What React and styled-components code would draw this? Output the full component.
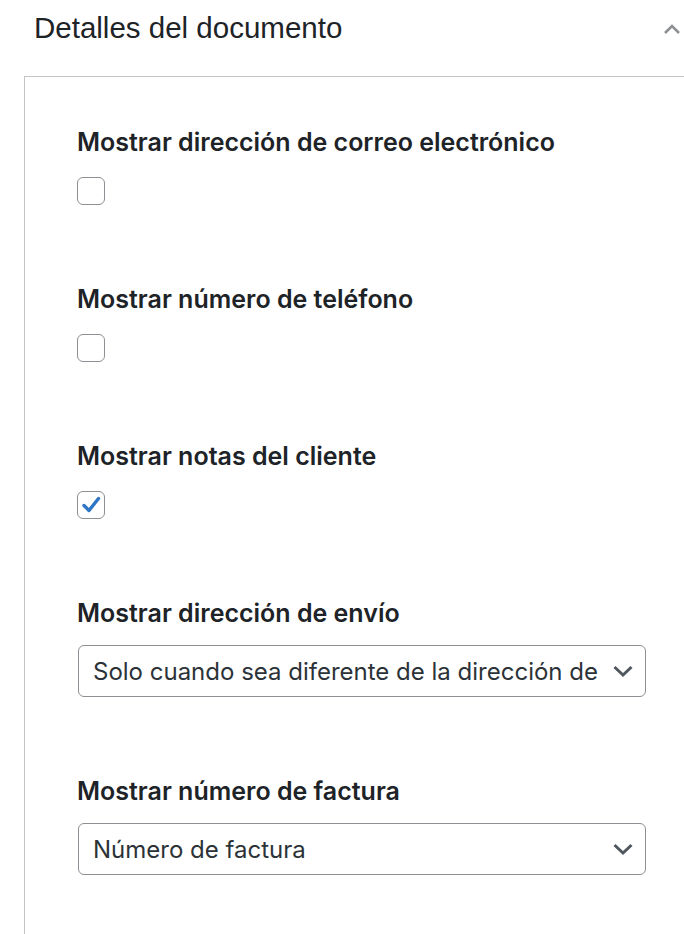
import React from 'react'
import styled, { createGlobalStyle } from 'styled-components'

const GlobalStyle = createGlobalStyle`
    body {
        margin: 0;
        background: #fff;
    }
`

const ChevronUp = () => (
    <svg width="20" height="20" viewBox="0 0 20 20">
        <path d="M3 13 L10 6 L17 13" fill="none" stroke="currentColor" strokeWidth="2.6" />
    </svg>
)

const ChevronDown = () => (
    <svg width="20" height="20" viewBox="0 0 20 20">
        <path d="M1.5 6 L10 14 L18.5 6" fill="none" stroke="currentColor" strokeWidth="3" />
    </svg>
)

const Check = () => (
    <svg width="22" height="22" viewBox="0 0 22 22">
        <path d="M4 11.5 L9 16.5 L18.5 4.5" fill="none" stroke="#2f76c6" strokeWidth="3.4" strokeLinecap="round" strokeLinejoin="round" />
    </svg>
)

const checkFields = [
    { label: 'Mostrar dirección de correo electrónico', checked: false },
    { label: 'Mostrar número de teléfono', checked: false },
    { label: 'Mostrar notas del cliente', checked: true },
]

const selectFields = [
    { label: 'Mostrar dirección de envío', value: 'Solo cuando sea diferente de la dirección de facturación' },
    { label: 'Mostrar número de factura', value: 'Número de factura' },
]

const App = () => {
    return (
        <Page>
            <GlobalStyle />
            <Header>
                <Title>Detalles del documento</Title>
                <Toggle>
                    <ChevronUp />
                </Toggle>
            </Header>
            <Panel>
                {checkFields.map((f) => (
                    <Field key={f.label}>
                        <Label>{f.label}</Label>
                        <Box>{f.checked && <Check />}</Box>
                    </Field>
                ))}
                {selectFields.map((f) => (
                    <Field key={f.label} select>
                        <Label>{f.label}</Label>
                        <Select>
                            <SelectText>{f.value}</SelectText>
                            <Arrow>
                                <ChevronDown />
                            </Arrow>
                        </Select>
                    </Field>
                ))}
            </Panel>
        </Page>
    )
}

export default App

const Page = styled.div`
    width: 684px;
    height: 934px;
    overflow: hidden;
    background: #fff;
`

const Header = styled.div`
    height: 76px;
    display: flex;
    align-items: flex-start;
    justify-content: space-between;
    padding: 0 0 0 34px;
    box-sizing: border-box;
`

const Title = styled.h2`
    margin: 11px 0 0;
    font-family: "Liberation Sans", Arial, sans-serif;
    font-weight: 400;
    font-size: 29.5px;
    line-height: 34px;
    color: #1d2327;
`

const Toggle = styled.div`
    margin: 20px 2px 0 0;
    width: 20px;
    height: 20px;
    color: #8c8f94;
`

const Panel = styled.div`
    margin-left: 24px;
    border-top: 1px solid #c3c4c7;
    border-left: 1px solid #c3c4c7;
    padding: 50px 38px 0 52px;
    min-height: 900px;
`

const Field = styled.div`
    display: flex;
    flex-direction: column;
    align-items: flex-start;
    gap: ${(p) => (p.select ? '17px' : '20px')};
    margin-bottom: 79px;
`

const Label = styled.div`
    font-family: Inter, "Noto Sans", sans-serif;
    font-weight: 600;
    font-size: 25px;
    line-height: 30px;
    color: #1d2327;
`

const Box = styled.div`
    width: 28px;
    height: 28px;
    box-sizing: border-box;
    border: 1.5px solid #8c8f94;
    border-radius: 6px;
    display: flex;
    align-items: center;
    justify-content: center;
`

const Select = styled.div`
    width: 568px;
    height: 52px;
    margin-left: 1px;
    box-sizing: border-box;
    border: 1.5px solid #8c8f94;
    border-radius: 6px;
    display: flex;
    align-items: center;
    padding: 0 12px 0 14px;
`

const SelectText = styled.div`
    flex: 1;
    margin-right: 9px;
    overflow: hidden;
    white-space: nowrap;
    font-family: Inter, "Noto Sans", sans-serif;
    font-size: 24px;
    color: #2c3338;
`

const Arrow = styled.div`
    width: 20px;
    height: 20px;
    color: #50575e;
`
